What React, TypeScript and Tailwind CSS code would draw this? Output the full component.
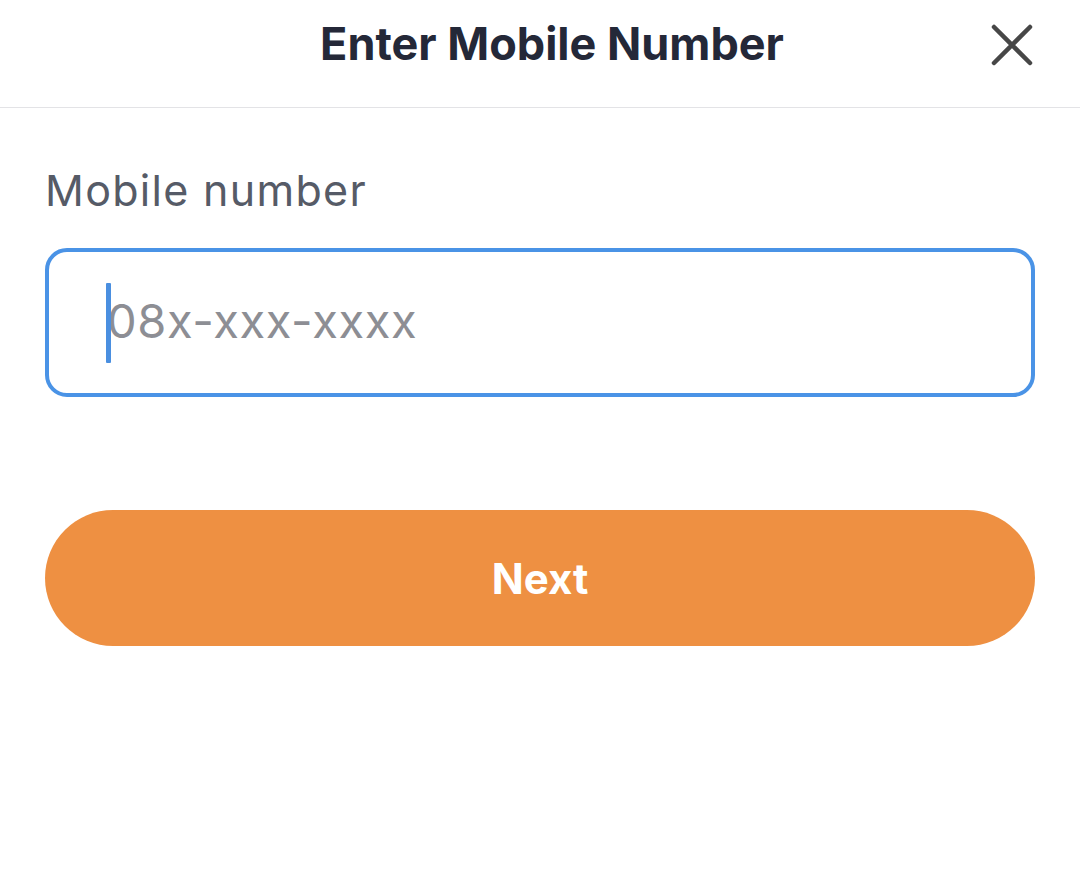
import React from "react";

export default function App() {
  return (
    <div className="w-[1080px] h-[871px] bg-white" style={{ fontFamily: "Inter, 'Noto Sans', sans-serif" }}>
      <div className="relative h-[108px] border-b border-[#e3e3e6] flex items-center justify-center">
        <h1 className="text-[45px] font-bold text-[#242838] tracking-[0px] pb-[20px] ml-[24px]">Enter Mobile Number</h1>
        <button className="absolute right-[47px] top-[24px] w-[42px] h-[42px] flex items-center justify-center">
          <svg width="42" height="42" viewBox="0 0 42 42" fill="none" stroke="#474747" strokeWidth="4.5" strokeLinecap="round">
            <path d="M3 3 L39 39 M39 3 L3 39" />
          </svg>
        </button>
      </div>
      <div className="px-[45px] pt-[58px]">
        <div className="text-[43px] text-[#565b67] leading-[48px] tracking-[1.3px]">Mobile number</div>
        <div className="mt-[34px] h-[149px] rounded-[22px] border-[4px] border-[#4a93e6] flex items-center pl-[58px] relative">
          <div className="absolute left-[57px] top-[31px] w-[5px] h-[80px] bg-[#4a8fe0] rounded-[1px]" />
          <span className="text-[47px] text-[#8d8e94] tracking-[0.6px] -mt-[2px]">08x-xxx-xxxx</span>
        </div>
        <button className="mt-[113px] w-full h-[136px] rounded-full bg-[#ee9042] text-white text-[42px] font-bold flex items-center justify-center">
          Next
        </button>
      </div>
    </div>
  );
}
